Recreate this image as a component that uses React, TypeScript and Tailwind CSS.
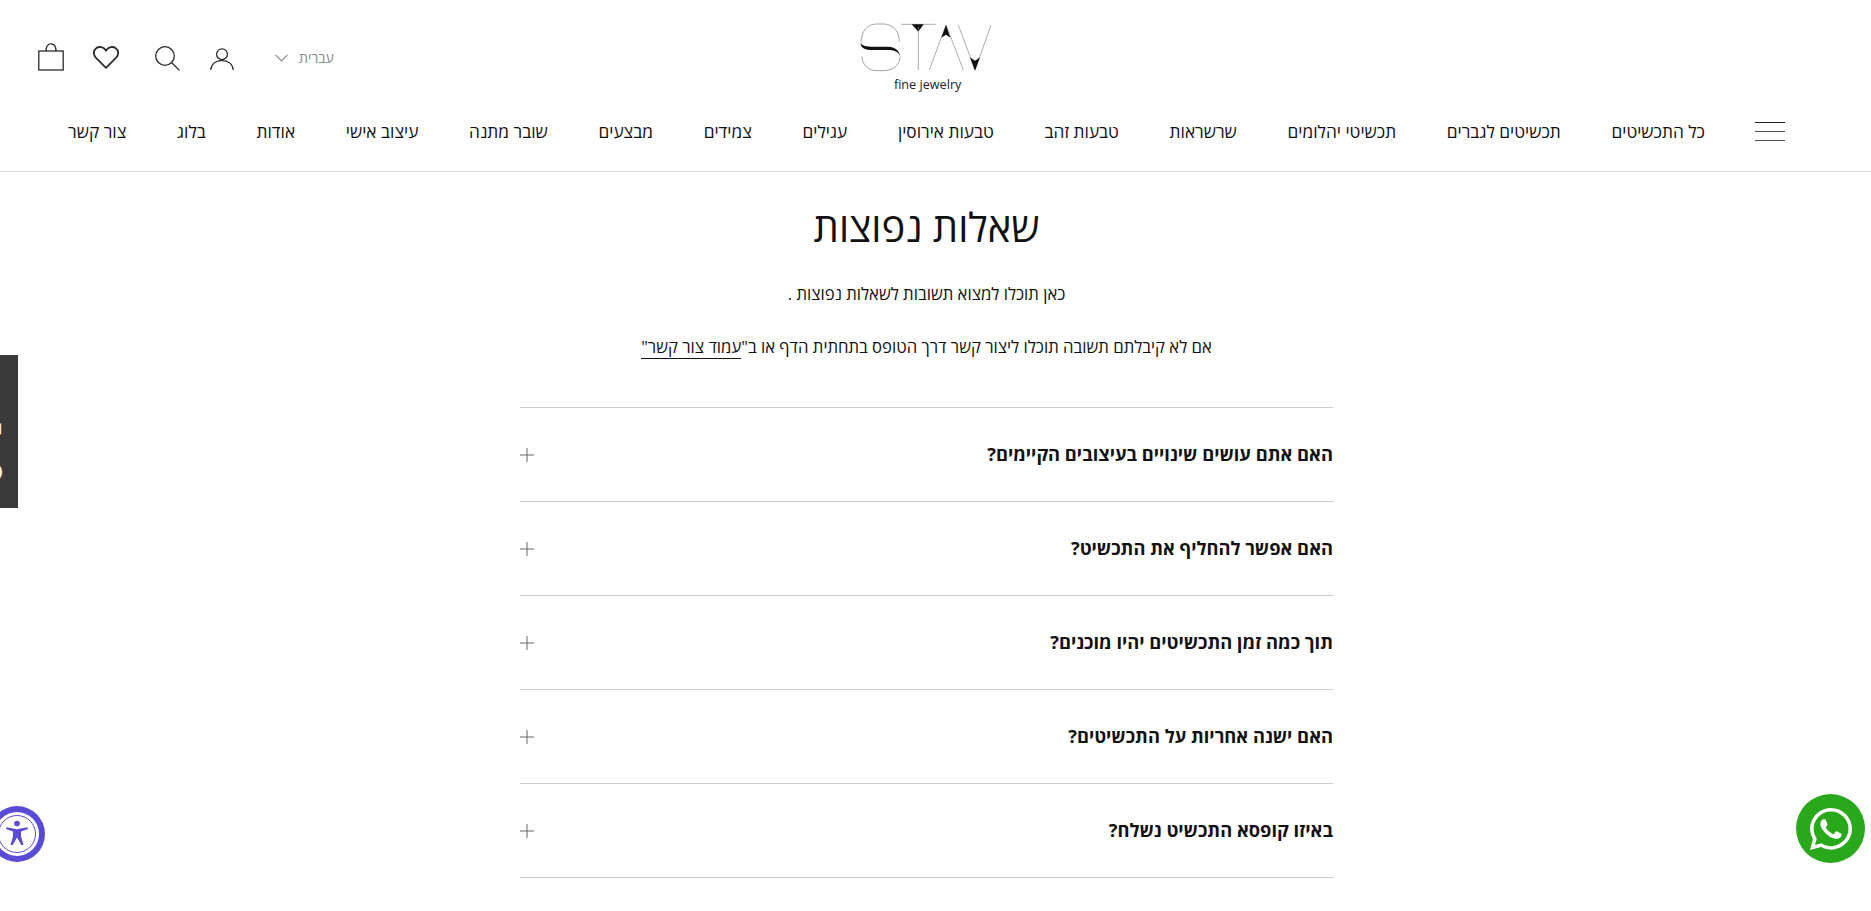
import React from 'react';
import { FaWhatsapp } from 'react-icons/fa';

const navItems = [
  'כל התכשיטים', 'תכשיטים לגברים', 'תכשיטי יהלומים', 'שרשראות', 'טבעות זהב', 'טבעות אירוסין',
  'עגילים', 'צמידים', 'מבצעים', 'שובר מתנה', 'עיצוב אישי', 'אודות', 'בלוג', 'צור קשר',
];

const questions = [
  'האם אתם עושים שינויים בעיצובים הקיימים?',
  'האם אפשר להחליף את התכשיט?',
  'תוך כמה זמן התכשיטים יהיו מוכנים?',
  'האם ישנה אחריות על התכשיטים?',
  'באיזו קופסא התכשיט נשלח?',
];

const Logo = () => (
  <svg width="134" height="80" viewBox="120 60 402 240" className="block">
    {/* S */}
    <path d="M238 125C238 90 215 72 190 72L170 72C140 72 124 95 123 128" fill="none" stroke="#555" strokeWidth="1.6" />
    <path d="M122 128C125 137 140 140 160 140L205 140C228 141 240 155 240 170C238 157 225 150 205 150L160 150C135 150 122 145 122 128Z" fill="#111" />
    <path d="M240 170C240 195 220 212 190 212L170 212C145 212 127 195 126 170" fill="none" stroke="#555" strokeWidth="1.6" />
    {/* T */}
    <path d="M243 73H347" stroke="#666" strokeWidth="1.6" />
    <path d="M275 73H311L295 95Z" fill="#111" />
    <path d="M295 80V210" stroke="#888" strokeWidth="2" />
    {/* A */}
    <path d="M378 75L328 210M378 75L430 210" stroke="#666" strokeWidth="1.6" fill="none" />
    <path d="M378 75L364 113L378 104L391 113Z" fill="#111" />
    {/* V */}
    <path d="M415 75L465 210M513 75L465 210" stroke="#666" strokeWidth="1.6" fill="none" />
    <path d="M450 172L465 182L480 172L465 212Z" fill="#111" />
    <text x="323" y="268" textAnchor="middle" fontSize="38" fill="#222" fontFamily="'Open Sans', sans-serif">fine jewelry</text>
  </svg>
);

const HeaderIcons = () => (
  <div className="flex items-start h-[27px] mt-[43px] pl-[38px] text-[#2b2b2b]">
    {/* bag */}
    <svg width="26" height="28" viewBox="0 0 26 28" fill="none" stroke="currentColor" strokeWidth="1.3">
      <rect x="0.8" y="8" width="24.4" height="19" />
      <path d="M8 8C8 3 10 0.8 13 0.8S18 3 18 8" />
    </svg>
    {/* heart */}
    <svg className="ml-[29px] mt-[3px]" width="26" height="23" viewBox="0 0 26 23" fill="none" stroke="currentColor" strokeWidth="1.8">
      <path d="M13 21.8L2.8 11.6C-0.2 8.4 0.6 4 3.2 2.2 6.2 0 10.6 0.8 13 4.6 15.4 0.8 19.8 0 22.8 2.2 25.4 4 26.2 8.4 23.2 11.6Z" />
    </svg>
    {/* search */}
    <svg className="ml-[36px] mt-[3px]" width="25" height="25" viewBox="0 0 25 25" fill="none" stroke="currentColor" strokeWidth="1.3">
      <circle cx="10" cy="10" r="9.3" />
      <path d="M16.8 16.8L24.4 24.4" />
    </svg>
    {/* user */}
    <svg className="ml-[30px] mt-[5px]" width="24" height="22" viewBox="0 0 24 22" fill="none" stroke="currentColor" strokeWidth="1.3">
      <circle cx="12" cy="6.2" r="5.4" />
      <path d="M0.7 21.8C1.4 15.8 6 12.6 12 12.6S22.6 15.8 23.3 21.8" />
    </svg>
    {/* language */}
    <div className="ml-[41px] flex items-center h-[29px] text-[#8a8a8a]">
      <svg width="13" height="8" viewBox="0 0 13 8" fill="none" stroke="currentColor" strokeWidth="1.1">
        <path d="M0.5 0.8L6.5 7L12.5 0.8" />
      </svg>
      <span dir="rtl" className="ml-[11px] text-[14px] leading-[30px]">עברית</span>
    </div>
  </div>
);

export default function App() {
  return (
    <div className="h-screen overflow-hidden bg-white">
      <header className="border-b border-[#dcdcdc] h-[172px]">
        <div dir="rtl" className="w-[1853px] text-[#111] font-['Open_Sans',sans-serif]">
          <div dir="ltr" className="grid grid-cols-[1fr_auto_1fr] h-[100px]">
            <HeaderIcons />
            <div className="pt-5">
              <Logo />
            </div>
            <div />
          </div>
          <nav className="flex items-center h-[63px] pr-[68px] pl-[68px] gap-[50px]">
            <div className="w-[30px] flex flex-col gap-[8px] shrink-0">
              <span className="h-px bg-[#222]" />
              <span className="h-px bg-[#555]" />
              <span className="h-px bg-[#555]" />
            </div>
            <ul className="flex-1 flex justify-between text-[17.3px] font-medium whitespace-nowrap">
              {navItems.map(item => (
                <li key={item}>{item}</li>
              ))}
            </ul>
          </nav>
        </div>
      </header>

      <main dir="rtl" className="w-[1853px] flex flex-col items-center text-[#111] font-['Open_Sans',sans-serif]">
        <h1 className="mt-[29px] text-[40px] leading-[52px] font-medium">שאלות נפוצות</h1>
        <p className="mt-[29px] text-[16.7px] font-medium leading-[24px]">כאן תוכלו למצוא תשובות לשאלות נפוצות .</p>
        <p className="mt-[29px] text-[16.7px] font-medium leading-[24px]">
          אם לא קיבלתם תשובה תוכלו ליצור קשר דרך הטופס בתחתית הדף או ב"
          <a className="border-b border-[#111]">עמוד צור קשר"</a>
        </p>

        <div className="mt-[48px] w-[813px] border-t border-[#ccc]">
          {questions.map(q => (
            <div key={q} className="flex items-center justify-between h-[94px] border-b border-[#ccc]">
              <span className="text-[18.3px] font-bold pb-[2px]">{q}</span>
              <svg width="14" height="14" viewBox="0 0 14 14" stroke="#666" strokeWidth="1">
                <path d="M0 7H14M7 0V14" />
              </svg>
            </div>
          ))}
        </div>
      </main>

      {/* side tab, mostly off screen */}
      <div className="fixed left-0 top-[355px] w-[18px] h-[153px] bg-[#3a3a3a] overflow-hidden font-['Open_Sans',sans-serif] text-[#eee] font-bold">
        <span className="absolute right-[14px] top-[68px] [writing-mode:vertical-rl] text-[20px] leading-[20px]">T</span>
        <span className="absolute right-[11px] top-[108px] [writing-mode:vertical-rl] text-[32px] leading-[32px]">8</span>
      </div>

      {/* accessibility button */}
      <div className="fixed left-[-11px] top-[806px] w-[56px] h-[56px] rounded-full bg-[#5a4bd6] flex items-center justify-center">
        <svg width="44" height="44" viewBox="0 0 44 44">
          <circle cx="22" cy="22" r="22" fill="#fff" />
          <circle cx="22" cy="22" r="18.5" fill="none" stroke="#5a4bd6" strokeWidth="1" />
          <circle cx="22" cy="11.5" r="2.8" fill="#5a4bd6" />
          <path d="M11.5 15.2L22 17.2L32.5 15.2L33 17L26 19.5V24.5L28.5 33H26.3L22 25.5L17.7 33H15.5L18 24.5V19.5L11 17Z" fill="#5a4bd6" />
        </svg>
      </div>

      {/* whatsapp button */}
      <div className="fixed left-[1796px] top-[794px] w-[69px] h-[69px] rounded-full bg-[#2aa81c] flex items-center justify-center text-white">
        <FaWhatsapp size={48} />
      </div>
    </div>
  );
}
